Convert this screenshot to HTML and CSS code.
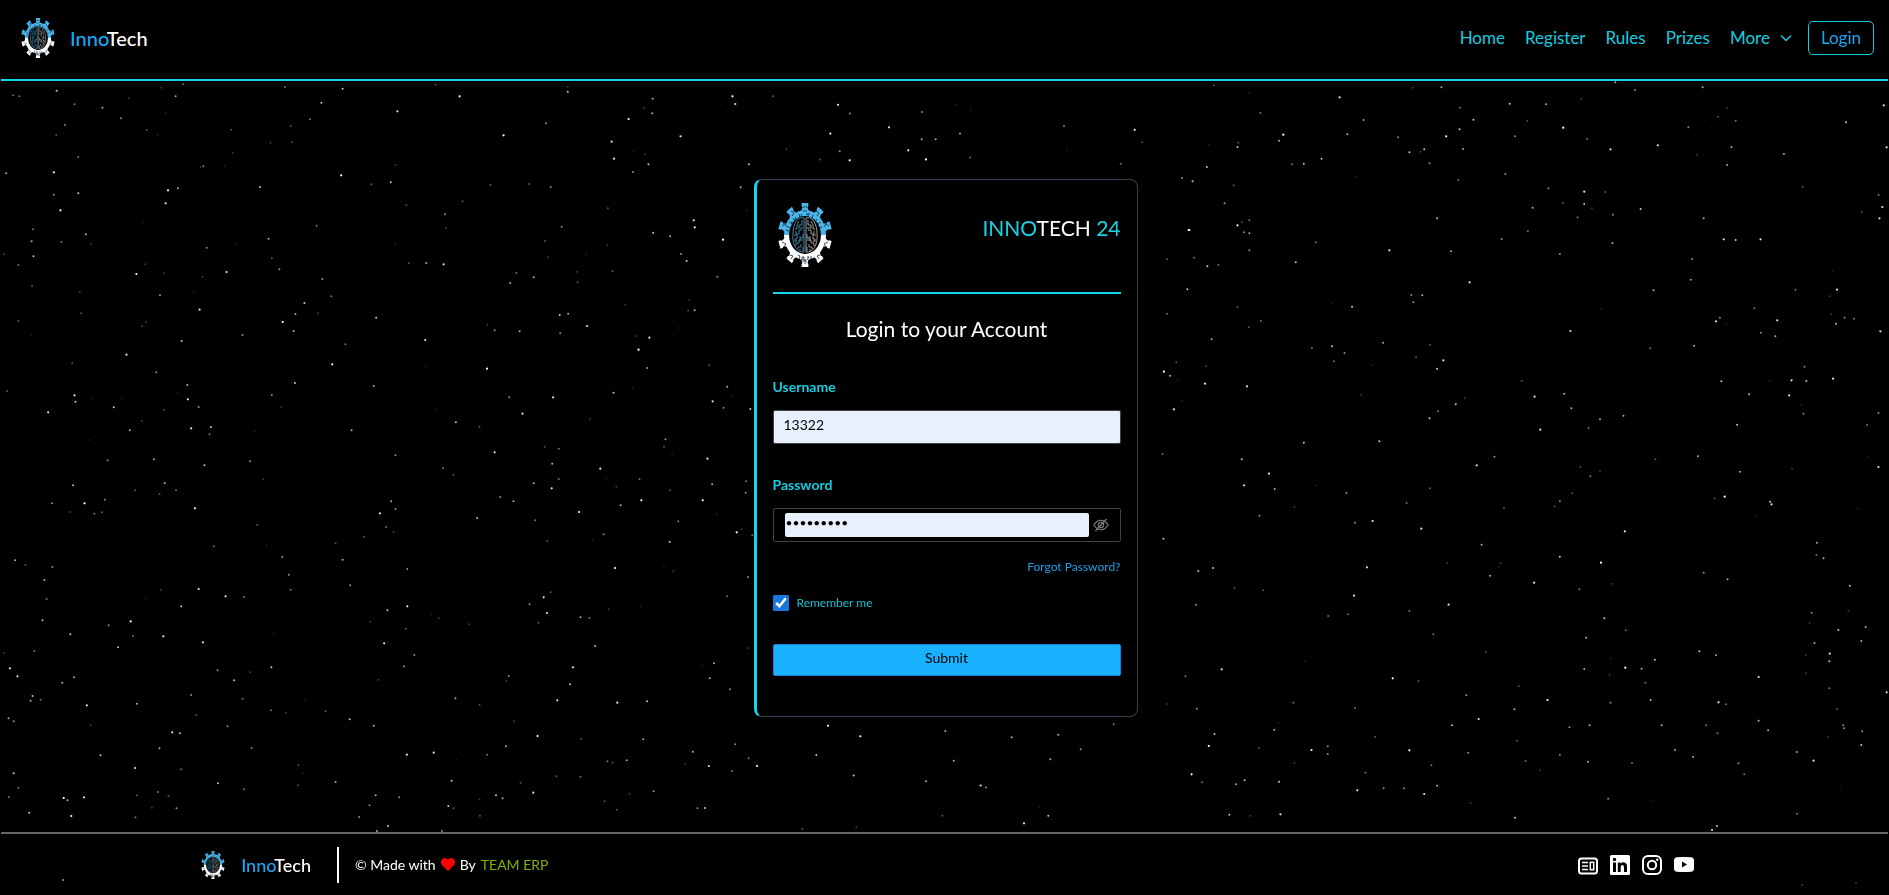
FILE: index.html
```html
<!DOCTYPE html>
<html lang="en">
<head>
<meta charset="utf-8">
<meta name="viewport" content="width=device-width, initial-scale=1">
<title>InnoTech</title>
<link rel="stylesheet" href="styles.css">
</head>
<body>
<svg class="defs" width="0" height="0" aria-hidden="true">
  <defs>
    <path id="tooth" d="M-5 -22L-3 -28L-4 -29V-32H4V-29L3 -28L5 -22Z"/>
    <g id="gear" transform="translate(27 32) scale(.84 1)">
      <path fill-rule="evenodd" d="M0 -25A25 25 0 1 1 0 25A25 25 0 1 1 0 -25ZM0 -19A19 19 0 1 0 0 19A19 19 0 1 0 0 -19Z"/>
      <use href="#tooth"/><use href="#tooth" transform="rotate(36)"/><use href="#tooth" transform="rotate(72)"/>
      <use href="#tooth" transform="rotate(108)"/><use href="#tooth" transform="rotate(144)"/><use href="#tooth" transform="rotate(180)"/>
      <use href="#tooth" transform="rotate(216)"/><use href="#tooth" transform="rotate(252)"/><use href="#tooth" transform="rotate(288)"/>
      <use href="#tooth" transform="rotate(324)"/>
    </g>
    <g id="lobe" fill="none" stroke-width=".9">
      <path d="M26 15C20 13 15 20 15 31C14 42 19 50 26 49Z"/>
      <path d="M24 17v5h-3v3h4M21 18l-2 4v4h-2M24 27h-3v4h-3v-3M25 31v4h-3v-2M16 32h3v4h-2v3M25 37h-4v3h-3v3M23 41v3h-3v2M25 44v4M22 46v2M22 35v3M19 38h-2"/>
    </g>
    <clipPath id="upper"><rect width="54" height="32"/></clipPath>
    <clipPath id="lower"><rect y="32" width="54" height="32"/></clipPath>
    <symbol id="logo" viewBox="0 0 54 64">
      <use href="#gear" fill="#4ab5ea" clip-path="url(#upper)"/>
      <use href="#gear" fill="#fff" clip-path="url(#lower)"/>
      <g fill="none" stroke="#123" stroke-width=".8">
        <path d="M25 5l2-2 2 2M25 8h4M38 8l3 2-2 3M13 8l3 2-2 3M4 23l3-2 2 3M46 24l2-3 3 2M4 39l4 2-2 3M50 39l-4 2 2 3M12 52l3 1-2 3M42 52l-3 1 2 3M27 56v5M25 58h4"/>
        <path d="M8 27l3 1M9 23l3 2M11 19l3 2v-3M15 15l2 3 1-4M21 11l1 4 2-4M28 11h4M30 11v4M35 12l-1 4 3 1M39 16l-2 3M43 19l-3 2M44 24l-3 1"/>
        <path d="M20 52l2 1-1 3M24 54h2v3h-2zM29 54h2l-2 3M33 53v3"/>
      </g>
      <use href="#lobe" stroke="#4393b5"/>
      <use href="#lobe" stroke="#aaa" transform="matrix(-1 0 0 1 54 0)"/>
    </symbol>
  </defs>
</svg>
<svg class="sky" id="sky" viewBox="0 0 1889 895" preserveAspectRatio="xMidYMid slice" aria-hidden="true"></svg>

<header class="topbar">
  <a class="brand" href="#">
    <svg class="brand-logo" aria-hidden="true"><use href="#logo"/></svg>
    <span><span class="blue">Inno</span>Tech</span>
  </a>
  <nav class="nav">
    <a href="#">Home</a>
    <a href="#">Register</a>
    <a href="#">Rules</a>
    <a href="#">Prizes</a>
    <button class="more" type="button">More
      <svg width="12" height="8" viewBox="0 0 12 8" aria-hidden="true"><path d="M1 1.500L6 6.500L11 1.500" fill="none" stroke="currentColor" stroke-width="1.500"/></svg>
    </button>
    <a class="login" href="#">Login</a>
  </nav>
</header>

<main class="main">
  <form class="card">
    <div class="card-head">
      <svg class="card-logo" aria-hidden="true"><use href="#logo"/></svg>
      <p class="event">INNO<span class="white">TECH</span> 24</p>
    </div>
    <h1 class="title">Login to your Account</h1>
    <label class="label" for="username">Username</label>
    <input class="field" id="username" type="text" value="13322">
    <label class="label" for="password">Password</label>
    <div class="field-wrap">
      <input class="secret" id="password" type="password" value="innotech2">
      <button class="eye" type="button" aria-label="Show password">
        <svg width="16" height="14" viewBox="0 0 16 14" fill="none" stroke="currentColor" stroke-width="1.300" aria-hidden="true"><path d="M1 7C4.500 .8 11.500 .8 15 7C11.500 13.200 4.500 13.200 1 7Z"/><circle cx="8" cy="7" r="2.600"/><path d="M2.500 13L13.500 1"/></svg>
      </button>
    </div>
    <a class="forgot" href="#">Forgot Password?</a>
    <label class="remember"><input type="checkbox" checked>Remember me</label>
    <button class="submit" type="submit">Submit</button>
  </form>
</main>

<footer class="footer">
  <a class="brand brand-small" href="#">
    <svg class="brand-logo" aria-hidden="true"><use href="#logo"/></svg>
    <span><span class="blue">Inno</span>Tech</span>
  </a>
  <p class="credit">© Made with
    <svg width="14" height="13" viewBox="0 0 14 13" aria-hidden="true"><path d="M7 13L1 7C-1.200 4.500 .5 0 4 0C5.500 0 6.500 1 7 2C7.500 1 8.500 0 10 0C13.500 0 15.200 4.500 13 7Z" fill="red"/></svg>
    By <span class="team">TEAM ERP</span></p>
  <div class="social">
    <a href="#" aria-label="News"><svg viewBox="0 0 20 20"><rect x="1" y="3.500" width="18" height="15" rx="2.500" fill="none" stroke="#fff" stroke-width="2"/><path d="M4 7.500h6M4 11h6M4 14.500h6" stroke="#fff" stroke-width="1.600"/><rect x="12.300" y="7.300" width="3.400" height="7.400" fill="none" stroke="#fff" stroke-width="1.500"/></svg></a>
    <a href="#" aria-label="LinkedIn"><svg viewBox="0 0 20 20"><path fill="#fff" fill-rule="evenodd" d="M1.500 0H18.500Q20 0 20 1.500V18.500Q20 20 18.500 20H1.500Q0 20 0 18.500V1.500Q0 0 1.500 0ZM3 7.500V17H6V7.500ZM4.500 2.800A1.700 1.700 0 1 0 4.500 6.200A1.700 1.700 0 1 0 4.500 2.800ZM7.800 7.500V17H10.700V12C10.700 9.300 14 9.300 14 12V17H17V11.300C17 6.800 12.300 6.300 10.700 8.800V7.500Z"/></svg></a>
    <a href="#" aria-label="Instagram"><svg viewBox="0 0 20 20" fill="none" stroke="#fff" stroke-width="2"><rect x="1" y="1" width="18" height="18" rx="5"/><circle cx="10" cy="10" r="4.200"/><circle cx="15.300" cy="4.700" r="1.200" fill="#fff" stroke="none"/></svg></a>
    <a href="#" aria-label="YouTube"><svg viewBox="0 0 20 20"><path fill="#fff" fill-rule="evenodd" d="M3 2.300Q10 1.600 17 2.300Q20 2.600 20 5.500V13.500Q20 16.400 17 16.700Q10 17.400 3 16.700Q0 16.400 0 13.500V5.500Q0 2.600 3 2.300ZM8 6.500V12.500L13 9.500Z"/></svg></a>
  </div>
</footer>
<script src="stars.js"></script>
</body>
</html>
```

FILE: styles.css
```css
* {
  box-sizing: border-box;
}

body {
  margin: 0;
  min-height: 100vh;
  display: flex;
  flex-direction: column;
  padding: 0 1px;
  background: #000;
  color: #fff;
  font-family: Lato, "Liberation Sans", sans-serif;
  font-size: 16px;
  line-height: 20px;
}

a {
  color: inherit;
  text-decoration: none;
}

button,
input {
  font: inherit;
}

.defs {
  position: absolute;
}

.sky {
  position: fixed;
  inset: 0;
  width: 100%;
  height: 100%;
  z-index: -1;
}

.topbar {
  display: flex;
  align-items: center;
  justify-content: space-between;
  height: 81px;
  padding: 0 14px 3px 20px;
  background: #000;
  border-bottom: 2px solid #15d5e8;
}

.brand {
  display: flex;
  align-items: center;
  gap: 15px;
  font-size: 20px;
  font-weight: 500;
}

.brand-logo {
  width: 34px;
  height: 40px;
}

.blue {
  color: #18a8f8;
}

.nav {
  display: flex;
  align-items: center;
  gap: 20px;
  color: #15cde0;
  font-size: 17px;
}

.more {
  display: flex;
  align-items: center;
  gap: 10px;
  padding: 0;
  border: 0;
  background: none;
  color: inherit;
}

.login {
  margin-left: -4px;
  padding: 6px 12px;
  border: 1px solid #15cde0;
  border-radius: 5px;
  color: #18a8f8;
}

.main {
  flex: 1;
  display: flex;
  align-items: center;
  justify-content: center;
  padding: 18px 15px 36px 17px;
}

.card {
  display: flex;
  flex-direction: column;
  width: 384px;
  max-width: 100%;
  padding: 16px 16px 40px;
  background: #000;
  border: 1px solid #33404c;
  border-left: 3px solid #15d5e8;
  border-radius: 8px;
}

.card-head {
  display: flex;
  justify-content: space-between;
  align-items: flex-start;
  height: 98px;
  padding: 7px 0 0 5px;
  border-bottom: 2px solid #15d5e8;
}

.card-logo {
  width: 54px;
  height: 64px;
}

.event {
  margin: 15px 0 0;
  color: #15d5e8;
  font-size: 21px;
}

.white {
  color: #fff;
}

.title {
  margin: 21px 0 34px;
  font-size: 21px;
  line-height: 28px;
  font-weight: 400;
  text-align: center;
}

.label {
  margin-bottom: 13px;
  color: #15cde0;
  font-size: 14px;
  font-weight: 700;
}

.field,
.field-wrap {
  height: 34px;
  border: 1px solid #424242;
  border-radius: 2px;
}

.field {
  width: 100%;
  margin-bottom: 31px;
  padding: 0 10px 4px;
  background: #e8f0fe;
  color: #000;
  font-size: 14px;
}

.field-wrap {
  display: flex;
  align-items: center;
  padding: 0 11px;
}

.secret {
  flex: 1;
  min-width: 0;
  height: 24px;
  padding: 0 1px 4px;
  border: 0;
  border-radius: 2px;
  background: #e8f0fe;
  color: #000;
  font-size: 12px;
}

.eye {
  display: flex;
  margin-left: 4px;
  padding: 0;
  border: 0;
  background: none;
  color: #777;
}

.forgot {
  align-self: flex-end;
  margin-top: 15px;
  color: #18a0e8;
  font-size: 12px;
}

.remember {
  display: flex;
  align-items: center;
  gap: 8px;
  margin-top: 16px;
  color: #15c0d0;
  font-size: 12px;
}

.remember input {
  width: 16px;
  height: 16px;
  margin: 0;
  accent-color: #1878de;
}

.submit {
  height: 32px;
  margin-top: 31px;
  padding: 0 0 3px;
  border: 1px solid #1880e8;
  border-radius: 2px;
  background: #18b2ff;
  color: #000;
  font-size: 14px;
}

.footer {
  display: flex;
  align-items: center;
  height: 63px;
  padding: 0 10.300% 0 10.500%;
  border-top: 2px solid #666;
}

.brand-small {
  gap: 14px;
  padding-right: 26px;
  font-size: 18px;
  line-height: 36px;
  border-right: 2px solid #fff;
}

.brand-small .brand-logo {
  width: 28px;
  height: 28px;
}

.credit {
  display: flex;
  align-items: center;
  gap: 5px;
  margin: 0 auto 0 16px;
  font-size: 14px;
}

.team {
  color: #82b000;
}

.social {
  display: flex;
  gap: 12px;
}

.social svg {
  display: block;
  width: 20px;
  height: 20px;
}
```

FILE: stars.js
```js
// Star chart. Each sector has an origin and a scale; stars are x, y, brightness (1-9).
const sectors = [
  { x: 0, y: 80, sx: 740 / 1568, sy: 1 / 3, stars: [
    28,46,4, 41,49,4, 120,32,7, 158,73,4, 273,54,2, 342,23,2, 388,13,4, 372,49,6, 217,83,6, 256,115,5, 351,99,1, 138,135,5, 119,165,3, 311,150,3, 334,165,1,
    604,21,4, 726,26,7, 681,68,7, 657,118,4, 616,139,3, 490,149,3, 573,188,2, 619,187,3, 493,219,2, 842,94,8, 923,14,3, 974,49,9, 1067,166,9, 1157,130,5, 1203,20,2, 1203,35,7,
    1383,56,6, 1364,83,2, 1382,100,6, 1332,117,9, 1526,73,1, 1558,72,8, 1552,49,9, 1442,169,8, 1296,185,8, 1301,236,8, 1343,213,1, 1367,222,2, 1374,253,7, 1341,276,5,
    166,231,4, 13,280,6, 114,277,9, 431,259,5, 425,261,2, 476,257,1, 723,286,9, 838,255,2, 828,307,7, 787,313,3, 551,321,7, 377,325,6, 356,331,9, 351,370,8, 166,340,7, 114,344,5, 128,391,9,
    1039,315,3, 1121,312,3, 1167,321,5, 980,364,3, 861,376,3, 943,403,5, 945,443,2, 671,437,4, 1190,440,5, 1155,483,3, 1288,385,3, 1470,421,8, 1472,442,9, 1384,458,7, 1420,469,6, 1532,479,9,
    70,448,4, 67,484,6, 130,486,4, 182,463,6, 193,491,2, 304,427,1, 438,503,5, 569,476,6, 500,492,1, 837,491,1, 8,523,2, 71,529,7, 39,555,4, 289,582,9, 308,553,2, 347,579,2, 480,576,8, 429,590,2, 576,535,3, 592,568,5,
    866,550,3, 903,549,6, 940,553,8, 683,597,5, 702,649,4, 645,669,7, 674,700,2, 626,702,6, 599,726,9, 622,753,6, 797,713,7, 732,793,4, 704,853,9, 901,780,8, 902,859,1,
    1287,496,2, 1443,522,5, 1455,543,7, 1161,532,2, 1243,523,1, 1094,579,4, 1131,592,6, 1081,609,6, 1222,575,2, 1298,573,3, 1224,607,3, 1520,590,5, 1461,660,2, 1472,691,6, 1458,692,2, 1325,675,2,
    1186,705,7, 1204,701,6, 1244,738,8, 1033,734,2, 1048,751,5, 1101,754,6, 1187,760,5, 1348,769,2, 1376,773,8, 1353,809,9, 1371,864,5, 1437,744,1, 1503,856,3,
    68,618,3, 169,635,2, 339,646,5, 412,636,1, 172,700,3, 309,727,2, 301,739,2, 423,689,8, 39,723,3, 67,765,1, 385,783,7, 514,765,5, 268,824,8, 153,850,3, 331,877,5, 397,915,6, 398,958,8, 376,940,1,
    158,946,8, 160,965,7, 15,933,3, 195,956,1, 257,955,1, 241,982,7, 102,997,8, 347,989,3, 421,981,5, 301,1023,2, 275,1051,6, 405,1045,8, 447,1041,7, 444,1063,4, 190,1080,1, 625,909,7, 792,918,6, 576,945,5, 596,981,2, 745,1051,6, 540,1054,1,
    1032,866,9, 1079,952,5, 1172,952,8, 1107,1001,8, 966,1027,7, 1016,1040,3, 924,989,1, 1250,1018,2, 1300,938,7, 1340,925,1, 1541,920,6, 1510,964,8, 1533,983,5, 1549,948,1, 1410,1078,5, 1407,1100,3, 1154,1100,3, 1184,1106,4 ] },
  { x: 0, y: 450, sx: 740 / 1568, sy: 1 / 3, stars: [
    228,31,5, 326,28,6, 433,46,7, 530,34,5, 558,88,2, 155,106,7, 286,121,3, 349,99,6, 373,121,4, 338,132,3, 222,149,5, 179,160,9, 110,160,5, 148,186,2, 200,191,4, 216,187,3, 413,175,9, 545,224,3,
    838,16,5, 1048,7,8, 939,55,4, 961,74,3, 1170,41,6, 1272,56,8, 1499,26,8, 1424,13,1, 1184,87,4, 1131,100,6, 1169,115,8, 1284,85,1, 1355,88,4, 1306,110,2, 1420,121,3, 1509,103,6, 1060,141,5, 1088,154,6, 1359,151,9, 1489,151,9, 1315,166,6,
    829,154,6, 838,177,5, 805,190,8, 818,231,4, 834,245,2, 771,261,3, 711,280,3, 1011,204,7, 1227,186,9, 1134,211,4, 1437,214,4, 1519,192,1, 1279,253,5, 1160,274,3, 1255,271,1, 1419,276,7, 1561,247,9, 1303,354,9, 1407,350,1, 1427,364,2,
    453,289,4, 565,286,1, 598,321,5, 612,374,5, 616,419,4, 726,329,6, 863,357,5, 742,406,5, 32,331,6, 54,344,3, 111,351,5, 94,390,6, 99,447,4, 341,420,2, 308,445,1, 421,417,8, 478,439,8, 517,441,4, 384,469,7,
    90,511,7, 277,514,9, 230,526,5, 282,558,4, 346,559,8, 149,553,7, 430,577,8, 250,592,7, 580,552,1, 821,481,7, 863,469,8, 785,515,2, 860,536,3, 914,492,1, 930,505,2, 994,523,2, 814,580,8, 878,615,5, 856,649,5, 802,689,2,
    1167,427,3, 1152,442,8, 1122,463,5, 1159,489,8, 1141,518,3, 1230,502,6, 1249,504,4, 1290,478,2, 1357,470,1, 1541,439,4, 1261,588,7, 1214,652,8, 1208,703,7, 1181,751,8, 1308,758,8, 1371,754,7, 1078,678,5, 1073,692,2, 1513,640,6, 1489,648,1, 1504,685,6, 1547,718,5,
    9,608,2, 73,603,4, 21,655,8, 37,679,8, 157,682,6, 132,698,6, 69,738,7, 65,752,6, 86,749,4, 184,766,8, 290,761,6, 461,661,5, 530,667,2, 575,652,7, 496,691,7, 405,735,5, 514,746,4, 18,805,6, 29,814,5, 192,826,2, 416,795,3, 482,829,5,
    574,781,4, 606,788,2, 645,752,1, 690,784,3, 741,808,7, 792,827,6, 965,745,6, 1016,764,3, 1089,814,2, 1139,858,9, 1072,889,6, 1231,866,3, 1363,868,6, 1558,883,5, 1468,905,6,
    365,847,8, 381,850,7, 338,895,6, 533,894,5, 213,916,7, 286,954,8, 384,958,4, 632,946,3, 643,970,1, 631,1006,3, 711,996,6, 517,1018,4, 462,1000,7, 29,970,7, 39,1013,4, 19,1041,4, 135,1044,9, 143,1051,6, 178,1042,8, 62,1088,7, 151,1098,9,
    290,1036,3, 335,1026,4, 357,1038,3, 322,1073,2, 374,1075,5, 287,1102,4, 862,914,8, 919,908,8, 1032,914,4, 967,929,1, 957,992,7, 796,1036,6, 846,1042,5, 783,1066,5, 761,1101,5, 950,1068,7, 961,1075,3, 1051,1036,7, 1065,1045,6, 1016,1048,2, 1017,1097,3,
    1179,979,3, 1230,980,4, 1103,998,3, 1130,1028,8, 1287,934,4, 1298,938,3, 1328,931,6, 1452,942,2, 1502,948,8, 1551,963,4, 1385,1024,5, 1334,1031,2, 1281,1054,3, 1307,1079,3, 1478,1075,5, 1494,1074,7 ] },
  { x: 1140, y: 80, sx: 749 / 1568, sy: 1 / 3, stars: [
    155,16,3, 228,39,1, 252,99,4, 418,52,8, 571,23,2, 631,22,6, 468,120,6, 434,163,6, 300,164,9, 291,182,6, 204,201,7, 206,188,3, 4,187,3, 144,194,1, 140,261,7, 88,294,5, 110,304,7, 196,316,3, 177,370,5, 318,253,4, 343,251,7, 380,236,7, 453,291,1,
    670,83,4, 774,71,7, 850,73,6, 924,57,2, 995,7,6, 1036,30,5, 1178,22,6, 698,119,7, 669,148,7, 641,169,9, 540,172,5, 785,169,5, 811,123,3, 886,143,9, 936,177,4, 595,208,7, 587,215,2, 564,217,7, 676,207,6, 606,250,5, 666,300,4, 765,282,5,
    1229,84,2, 1210,110,3, 1247,122,4, 1148,142,5, 1197,143,1, 1084,196,8, 985,208,8, 1166,224,2, 1238,201,6, 1229,255,6, 1348,222,6, 1478,127,7, 1557,76,8, 1563,202,8, 1387,320,3, 1546,345,4, 1554,381,8, 1511,397,3, 1548,415,8,
    102,450,9, 103,450,9, 204,436,9, 229,421,4, 213,427,2, 218,457,5, 229,460,6, 229,511,5, 368,487,4, 522,511,8, 326,547,7, 113,533,4, 141,559,7, 164,555,4, 57,538,3, 99,628,7, 57,701,4, 204,682,3, 253,723,4, 228,742,3, 150,778,6,
    622,415,7, 757,477,5, 651,514,6, 690,607,8, 568,645,5, 591,646,6, 572,667,5, 444,680,7, 402,670,1, 509,788,6, 607,794,3, 578,832,3, 635,841,8, 622,866,7, 402,799,7, 360,804,4, 428,819,5, 406,844,4, 486,856,1,
    855,325,5, 930,335,8, 974,336,3, 886,368,3, 822,383,6, 930,372,7, 946,385,2, 916,412,4, 990,404,5, 1048,387,7, 812,453,4, 989,489,6, 879,522,5, 1180,415,6, 1222,478,8, 1247,480,7, 1299,478,8, 1156,537,5, 1153,599,6, 1075,631,6, 965,687,1, 901,753,8,
    1206,724,8, 1214,713,5, 1227,733,1, 1286,685,4, 1334,721,8, 1372,629,4, 1459,629,8, 1450,572,1, 1444,649,2, 1447,703,2, 1475,713,5, 1495,716,4, 1457,731,6, 1300,758,5, 1330,769,6, 1160,797,6, 1068,805,4, 1550,754,8,
    76,847,3, 50,875,9, 63,887,6, 79,901,1, 138,859,2, 136,911,8, 224,919,8, 71,988,8, 87,962,1, 463,944,2, 343,1088,7, 501,1084,7, 606,1015,7, 624,994,4, 661,973,7, 680,955,2, 826,950,8, 799,903,3, 888,941,6, 903,985,6, 838,1049,8, 963,1018,6, 1012,1007,6, 939,1044,4,
    1217,904,7, 1275,943,7, 1359,946,8, 1364,901,8, 1395,903,7, 1391,860,5, 1451,896,8, 1319,904,1, 1389,1001,5, 1383,975,1, 1250,1034,7, 1522,1035,4, 1546,999,5 ] },
  { x: 1140, y: 450, sx: 749 / 1568, sy: 1 / 3, stars: [
    47,12,4, 213,28,7, 270,71,8, 218,106,8, 282,117,6, 323,171,2, 250,197,5, 432,129,5, 368,106,1, 607,115,3, 558,159,4, 742,20,5, 705,46,8, 762,175,3, 450,218,5, 487,213,8, 589,236,8, 715,284,6, 49,266,7, 153,354,7, 122,363,7, 475,352,8,
    922,50,3, 943,79,4, 963,64,2, 905,130,3, 879,154,5, 868,169,3, 1079,28,3, 1168,19,6, 1256,65,6, 1365,56,2, 1546,51,8, 1524,20,1, 1224,140,9, 1203,145,3, 1319,155,7, 1322,163,8, 1290,198,1, 1502,176,1, 1015,244,8, 1417,278,6, 1416,315,4, 1431,325,6,
    198,414,3, 258,421,3, 117,464,5, 448,437,8, 394,498,4, 435,493,4, 564,483,4, 646,464,8, 614,553,4, 733,377,6, 755,340,2, 751,350,1, 643,340,2, 825,398,8, 879,320,7, 965,338,9, 920,418,4, 987,401,2, 1180,368,5, 1230,388,6, 1486,407,7, 1483,483,2,
    972,505,7, 1017,541,4, 934,563,6, 724,607,3, 529,685,9, 583,693,3, 171,658,8, 95,679,4, 345,634,1, 683,736,5, 793,709,3, 784,778,6, 853,750,9, 709,807,8, 653,826,7, 450,774,4, 321,758,4, 119,776,5, 56,762,2, 281,839,6, 290,818,1,
    1406,488,5, 1402,519,2, 1519,531,6, 1462,540,7, 1412,579,6, 1510,573,6, 1444,611,8, 1443,634,7, 1394,616,2, 1394,670,2, 1171,604,7, 1206,616,6, 1078,629,7, 1016,653,9, 1050,656,6, 930,657,6, 985,625,1, 983,674,2, 1058,698,4, 1295,681,8, 1443,715,4, 1563,727,8,
    985,758,5, 1069,750,7, 1211,757,8, 1227,763,4, 1459,777,3, 1295,812,6, 1472,826,5, 1474,835,5, 1512,844,5, 1510,885,7, 1440,861,2, 1315,841,6, 1209,850,4, 1185,826,4, 1092,826,6, 941,826,6, 899,832,5, 789,872,3, 492,860,3, 156,852,7, 144,888,9,
    249,895,3, 359,900,9, 393,889,5, 393,912,5, 564,901,9, 687,908,5, 807,933,4, 879,914,5, 938,935,6, 1030,939,4, 1120,900,6, 1158,921,6, 1253,940,5, 1265,973,4, 1375,906,6, 1410,932,8, 323,939,2, 108,973,9, 130,997,4, 219,991,7, 201,1003,6, 291,995,7,
    472,968,4, 610,946,4, 455,1021,8, 510,1015,5, 553,1015,5, 622,1007,6, 595,1032,8, 692,1059,2, 837,961,2, 980,1046,5, 1070,1051,1, 1466,1010,1, 1375,1091,4, 785,1103,7, 187,1094,7, 231,1097,2, 294,1093,8 ] },
  { x: 740, y: 80, sx: 1 / 3, sy: 750 / 1568, stars: [
    99,34,3, 294,52,8, 330,70,5, 447,99,8, 546,67,5, 647,52,1, 692,62,1, 271,112,9, 139,145,2, 27,176,7, 241,166,3, 299,149,5, 329,168,9, 505,147,9, 545,124,6, 587,124,6, 660,112,6, 558,166,9, 690,162,4, 972,96,5, 1184,104,9, 980,147,1, 1142,175,4, 2,224,6, 20,273,1,
    31,688,7, 18,839,4, 17,863,5, 37,952,4, 5,940,2, 24,1039,5, 23,1188,2, 264,1350,9, 361,1372,9, 229,1411,7, 26,1418,4, 51,1434,8, 341,1454,7, 558,1466,6, 616,1361,6, 641,1423,6, 722,1475,8, 738,1479,5, 815,1374,6, 955,1369,6, 1022,1399,5, 931,1420,6, 1121,1347,4, 925,1538,7, 852,1554,8, 607,1538,3, 187,1566,3, 899,1520,1, 349,1562,2 ] },
  { x: 0, y: 820, sx: 1, sy: 1, stars: [
    377,11,6, 442,11,5, 388,6,7, 63,60,5, 1712,10,8, 1717,6,7, 1802,65,2, 1856,63,2 ] }
];

const sky = document.getElementById('sky');
for (const sector of sectors) {
  for (let i = 0; i < sector.stars.length; i += 3) {
    const [x, y, brightness] = sector.stars.slice(i, i + 3);
    const star = document.createElementNS('http://www.w3.org/2000/svg', 'circle');
    star.setAttribute('cx', sector.x + x * sector.sx);
    star.setAttribute('cy', sector.y + y * sector.sy);
    star.setAttribute('r', brightness > 7 ? 1.1 : 1);
    star.setAttribute('fill', '#fff');
    star.setAttribute('fill-opacity', brightness / 9);
    sky.appendChild(star);
  }
}
```
